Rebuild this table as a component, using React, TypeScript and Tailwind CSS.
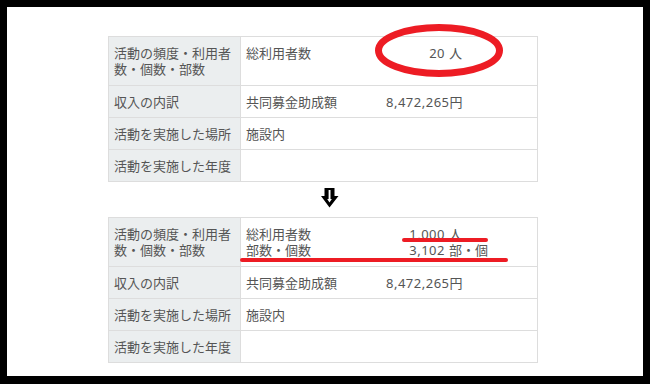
const LABEL_BG = "bg-[#ebeeef]";

function Row({
  label,
  children,
  tall = false,
}: {
  label: React.ReactNode;
  children?: React.ReactNode;
  tall?: boolean;
}) {
  const pad = tall ? "pt-2 pb-2" : "pt-2 pb-[7px]";
  return (
    <div className="grid grid-cols-[132px_1fr]">
      <div className={`${LABEL_BG} border-r border-[#dddddd] pl-[5px] pr-1 ${pad}`}>{label}</div>
      <div className={`pl-[5px] ${pad}`}>{children}</div>
    </div>
  );
}

function Amount({ name, num, unit }: { name: string; num: string; unit: string }) {
  return (
    <div className="flex">
      <span className="w-[140px]">{name}</span>
      <span className="w-[59px] text-right tracking-[0.5px]">{num}</span>
      <span className="ml-[4px]">{unit}</span>
    </div>
  );
}

function InfoTable({ after }: { after: boolean }) {
  return (
    <div className="w-[430px] border border-[#dddddd] divide-y divide-[#dddddd] text-[13px] leading-4 text-[#555555]">
      <Row
        tall
        label={
          <>
            活動の頻度・利用者
            <br />
            数・個数・部数
          </>
        }
      >
        {after ? (
          <>
            <Amount name="総利用者数" num="1,000" unit="人" />
            <Amount name="部数・個数" num="3,102" unit="部・個" />
          </>
        ) : (
          <Amount name="総利用者数" num="20" unit="人" />
        )}
      </Row>
      <Row label="収入の内訳">
        <div className="flex">
          <span className="w-[140px]">共同募金助成額</span>
          <span className="tracking-[0.5px]">8,472,265円</span>
        </div>
      </Row>
      <Row label="活動を実施した場所">施設内</Row>
      <Row label="活動を実施した年度" />
    </div>
  );
}

function DownArrow() {
  return (
    <svg width="18" height="20" viewBox="0 0 18 20" className="block">
      <polygon points="3.5,0 13.5,0 13.5,8 17.5,8 8.5,19.5 0,8 3.5,8" fill="#000" />
      <rect x="7.6" y="2" width="1.9" height="10" fill="#fff" />
      <polygon points="6.2,11 10.9,11 8.5,14.5" fill="#fff" />
    </svg>
  );
}

export default function App() {
  return (
    <div className="relative w-[650px] h-[384px] bg-black pt-[7px] pl-[7px] pr-[7px] pb-[8px] font-['Noto_Sans','Noto_Sans_CJK_JP',sans-serif]">
      <div className="w-full h-full bg-white pt-[29px] pl-[101px]">
        <InfoTable after={false} />
        <div className="ml-[213px] mt-[6px] mb-[9px]">
          <DownArrow />
        </div>
        <InfoTable after />
      </div>

      {/* red marker annotations */}
      <svg
        className="absolute inset-0 pointer-events-none"
        width="650"
        height="384"
        viewBox="0 0 650 384"
      >
        <ellipse cx="439" cy="50.5" rx="60.5" ry="23" fill="none" stroke="#ed1c24" strokeWidth="7" />
        <line x1="404" y1="240" x2="486" y2="240" stroke="#ed1c24" strokeWidth="4" strokeLinecap="round" />
        <line x1="242" y1="260" x2="506" y2="260" stroke="#ed1c24" strokeWidth="4" strokeLinecap="round" />
      </svg>
    </div>
  );
}
